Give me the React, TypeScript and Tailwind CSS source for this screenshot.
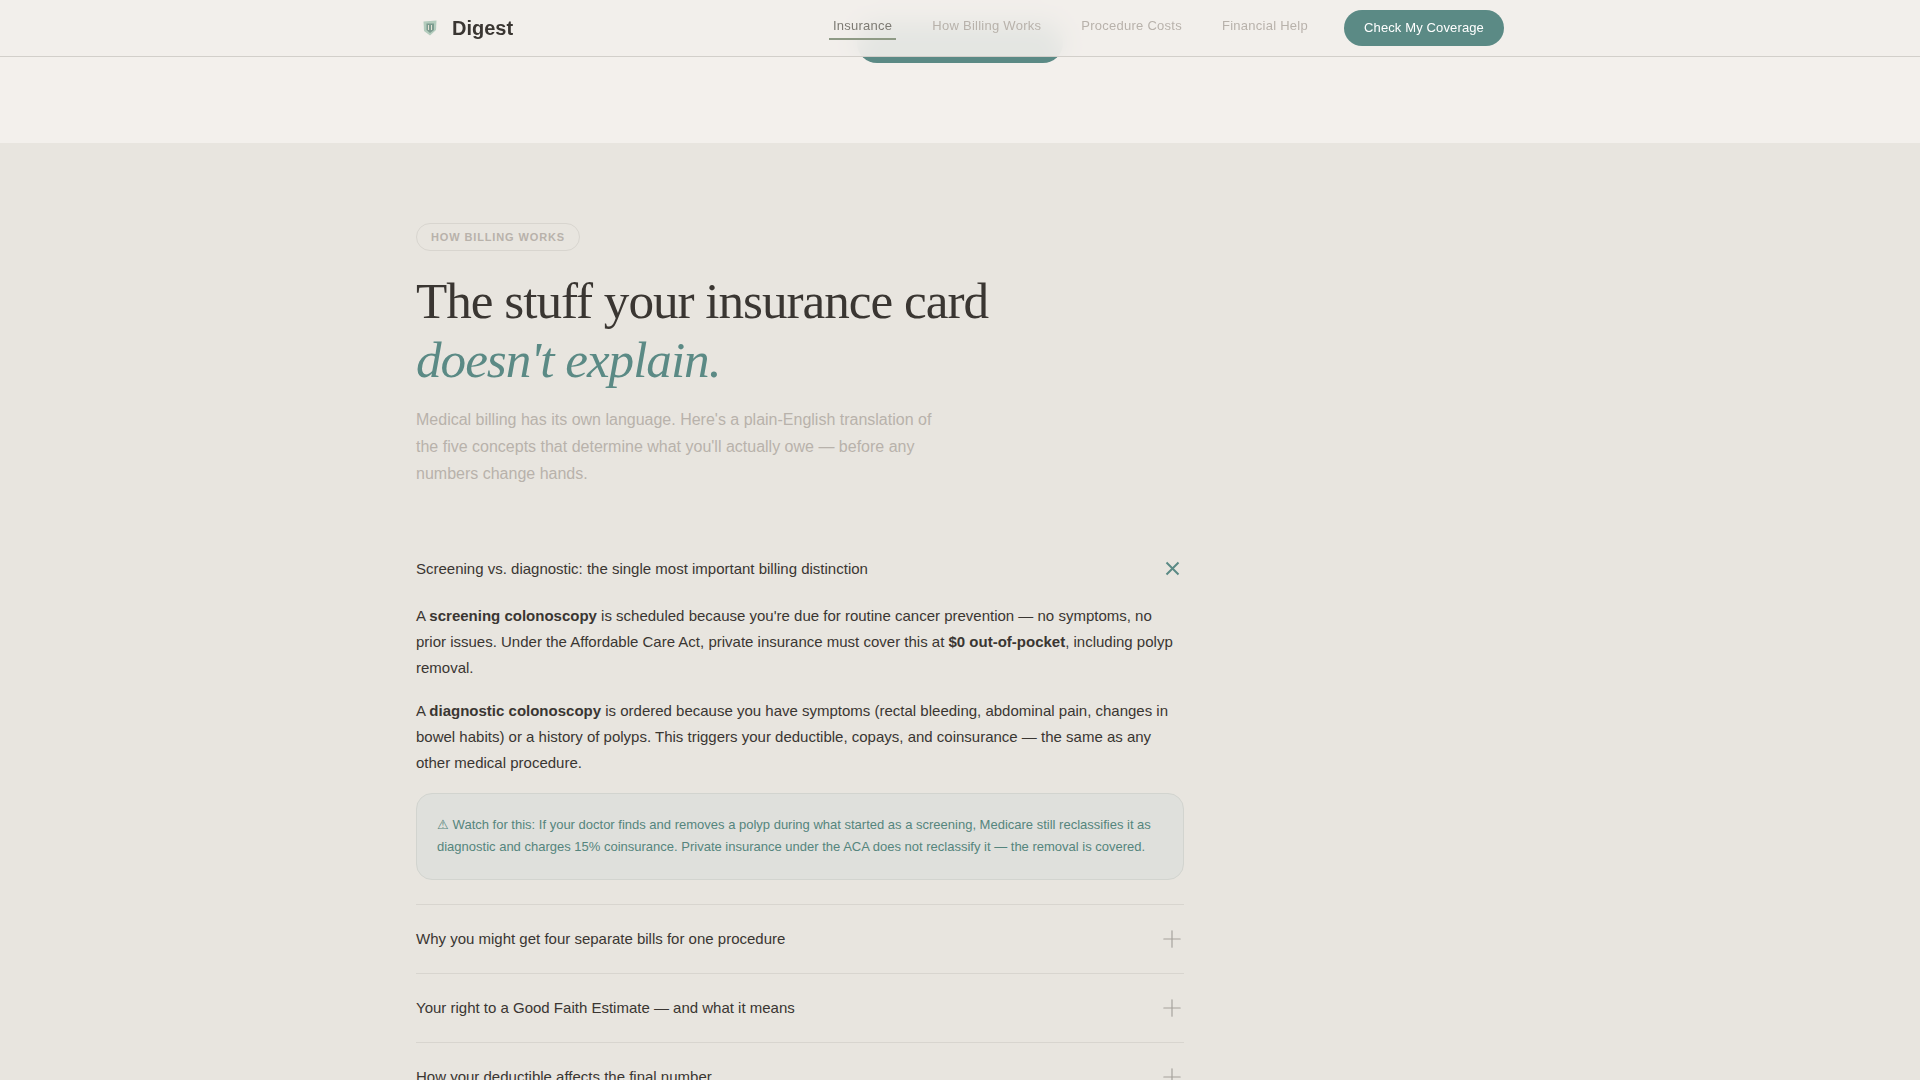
import { Plus } from 'lucide-react';

const navLinks = ['Insurance', 'How Billing Works', 'Procedure Costs', 'Financial Help'];

const closedQuestions = [
  'Why you might get four separate bills for one procedure',
  'Your right to a Good Faith Estimate — and what it means',
  'How your deductible affects the final number',
];

function LogoMark() {
  return (
    <svg width="14" height="16" viewBox="0 0 14 16" className="shrink-0">
      <path d="M0.5 1.5 L13.5 0.5 L13 10 L7 15.5 L1 11 Z" fill="#b4ccbd" />
      <path d="M3.5 3.5 H11 V10 L7 13 L3.5 10 Z" fill="#7d9c90" />
      <path d="M5.5 5 V10 M8.5 5 V10" stroke="#e6e3d6" strokeWidth="1" />
    </svg>
  );
}

function Nav() {
  return (
    <nav className="relative z-10 h-[57px] border-b border-[#d2cfca] bg-[#f3f0ec]/90 backdrop-blur-md">
      <div className="mx-auto flex h-14 w-[1088px] items-center justify-between">
        <div className="flex items-center gap-[15px] pl-[7px]">
          <LogoMark />
          <span className="text-xl font-bold text-[#3a3632]">Digest</span>
        </div>
        <div className="flex items-center gap-8">
          <div className="flex items-center gap-8">
            {navLinks.map((link, i) => (
              <a
                key={link}
                className={`-mt-[5px] border-b-2 px-1 pb-[4px] pt-[6px] text-[13px] leading-4 tracking-[0.02em] ${
                  i === 0 ? 'border-[#8e9a85] text-[#7d7a73]' : 'border-transparent text-[#b8b2ab]'
                }`}
              >
                {link}
              </a>
            ))}
          </div>
          <button className="h-9 w-40 rounded-full bg-[#5b8a85] text-[13px] tracking-[0.01em] text-white">
            Check My Coverage
          </button>
        </div>
      </div>
    </nav>
  );
}

function Question({ text }: { text: string }) {
  return (
    <div className="flex h-[69px] items-center justify-between border-t border-[#d8d5cf]">
      <span className="text-[15px] text-[#3a3632]">{text}</span>
      <Plus size={28} strokeWidth={1} className="-mr-0.5 text-[#a5a29c]" />
    </div>
  );
}

export default function App() {
  return (
    <div className="h-screen overflow-hidden bg-[#e8e5df] font-['Liberation_Sans',Arial,sans-serif]">
      <Nav />

      {/* Hero tail, scrolled mostly under the nav */}
      <div className="flex h-[86px] justify-center bg-[#f3f0ec]">
        <div className="-mt-[34px] h-10 w-[206px] rounded-[20px] bg-[#5b8a85]" />
      </div>

      <section className="mx-auto w-[1088px] pt-20">
        <span className="inline-flex h-7 w-[164px] items-center justify-center rounded-full border border-[#d8d5cf] text-[11px] font-bold tracking-[0.08em] text-[#b8b2ab]">
          HOW BILLING WORKS
        </span>

        <h1 className="mt-[21px] font-['Liberation_Serif',serif] text-[51.2px] font-normal leading-[1.15] tracking-[-0.02em] text-[#3a3632]">
          The stuff your insurance card
          <br />
          <em className="text-[#5b8a85]">doesn't explain.</em>
        </h1>

        <p className="mt-4 w-[530px] text-base leading-[27px] text-[#b8b2ab]">
          Medical billing has its own language. Here's a plain-English translation of the five concepts that
          determine what you'll actually owe — before any numbers change hands.
        </p>

        <div className="mt-12 w-[768px]">
          <div className="flex h-[68px] items-center justify-between pr-[4.5px]">
            <span className="text-[15px] text-[#3a3632]">
              Screening vs. diagnostic: the single most important billing distinction
            </span>
            <svg width="15" height="15" viewBox="0 0 15 15" fill="none" stroke="#5b8a85" strokeWidth="2">
              <path d="M1.5 1.5 L13.5 13.5 M13.5 1.5 L1.5 13.5" />
            </svg>
          </div>

          <div className="pb-6 text-[15px] leading-[26.25px] text-[#3a3632]">
            <p>
              A <strong>screening colonoscopy</strong> is scheduled because you're due for routine cancer prevention —
              no symptoms, no prior issues. Under the Affordable Care Act, private insurance must cover this at{' '}
              <strong>$0 out-of-pocket</strong>, including polyp removal.
            </p>
            <p className="mt-4">
              A <strong>diagnostic colonoscopy</strong> is ordered because you have symptoms (rectal bleeding, abdominal
              pain, changes in bowel habits) or a history of polyps. This triggers your deductible, copays, and
              coinsurance — the same as any other medical procedure.
            </p>
            <div className="mt-[17px] rounded-2xl border border-[#d2d4cf] bg-[#dfe0dc] px-5 pb-[21px] pt-5 text-[13px] leading-[22px] text-[#55857d]">
              ⚠ Watch for this: If your doctor finds and removes a polyp during what started as a screening, Medicare
              still reclassifies it as diagnostic and charges 15% coinsurance. Private insurance under the ACA does not
              reclassify it — the removal is covered.
            </div>
          </div>

          {closedQuestions.map((q) => (
            <Question key={q} text={q} />
          ))}
        </div>
      </section>
    </div>
  );
}
